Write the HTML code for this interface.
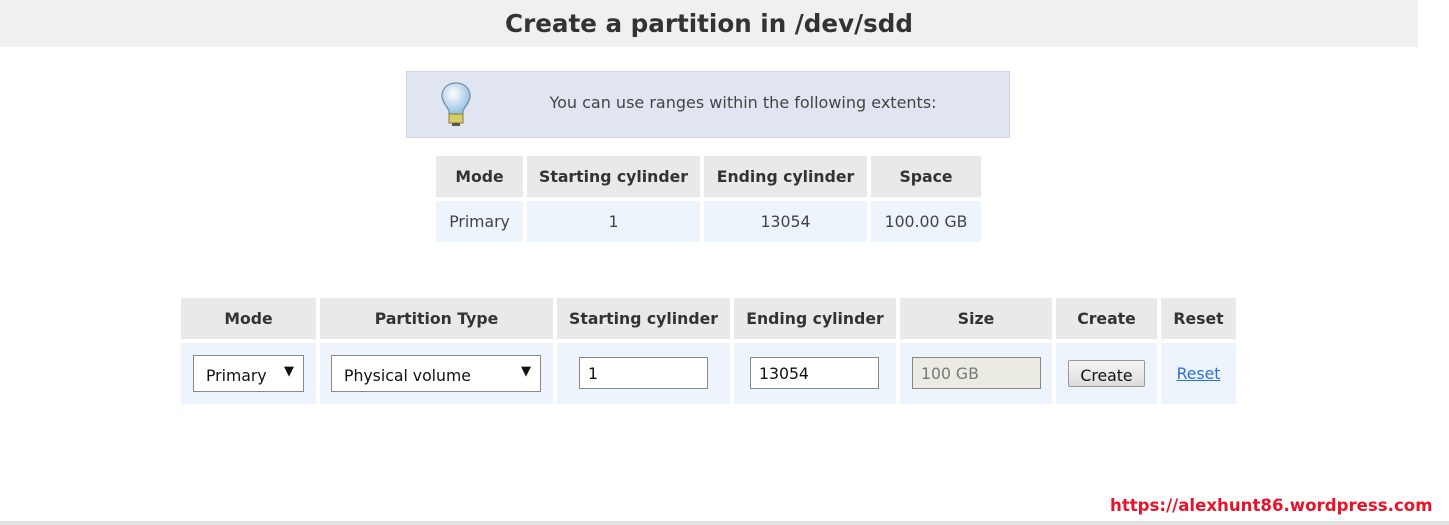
<!DOCTYPE html>
<html><head><meta charset="utf-8"><style>
*{margin:0;padding:0;box-sizing:border-box}
body{width:1449px;height:525px;position:relative;background:#fff;font-family:"DejaVu Sans","Liberation Sans",sans-serif;color:#333;overflow:hidden}
.a{position:absolute}
.c{position:absolute;display:flex;align-items:center;justify-content:center;font-size:15.7px;white-space:nowrap}
.h{background:#e9e9e9;font-weight:bold;color:#333}
.d{background:#edf4fc;color:#444}
.box{position:absolute;background:#fff;border:1px solid #888;font-size:15.7px;color:#111;display:flex;align-items:center;padding-left:8px;white-space:nowrap}
</style></head><body>
<div class="a" style="left:0;top:0;width:1418px;height:47px;background:#f0f0f0"></div>
<div class="c" style="left:0;top:0;width:1418px;height:47px;font-size:24.6px;font-weight:bold;color:#333">Create a partition in /dev/sdd</div>
<div class="a" style="left:406px;top:71px;width:604px;height:67px;background:#e1e5f1;border:1px solid #cfd3e3"></div>
<svg class="a" style="left:438px;top:80px" width="36" height="50" viewBox="0 0 36 50">
<defs><radialGradient id="g" cx="40%" cy="35%" r="60%"><stop offset="0" stop-color="#fff"/><stop offset="1" stop-color="#9cc3e6"/></radialGradient></defs>
<path d="M18 3C9 3 4 9 4 16c0 6 5 10 7 15v3h14v-3c2-5 7-9 7-15C32 9 27 3 18 3z" fill="url(#g)" stroke="#6f8fa8" stroke-width="1.2"/>
<rect x="11" y="34" width="14" height="9" fill="#d8cc6a" stroke="#8c7f30"/>
<rect x="14" y="43" width="8" height="3" fill="#555"/>
</svg>
<div class="c" style="left:549px;top:71px;width:388px;height:63px;font-size:16px;color:#444">You can use ranges within the following extents:</div>

<div class="c h" style="left:436px;top:156px;width:87px;height:41px">Mode</div>
<div class="c h" style="left:527px;top:156px;width:173px;height:41px">Starting cylinder</div>
<div class="c h" style="left:704px;top:156px;width:163px;height:41px">Ending cylinder</div>
<div class="c h" style="left:871px;top:156px;width:110px;height:41px">Space</div>
<div class="c d" style="left:436px;top:201px;width:87px;height:41px">Primary</div>
<div class="c d" style="left:527px;top:201px;width:173px;height:41px">1</div>
<div class="c d" style="left:704px;top:201px;width:163px;height:41px">13054</div>
<div class="c d" style="left:871px;top:201px;width:110px;height:41px">100.00 GB</div>

<div class="c h" style="left:181px;top:298px;width:135px;height:41px">Mode</div>
<div class="c h" style="left:320px;top:298px;width:233px;height:41px">Partition Type</div>
<div class="c h" style="left:557px;top:298px;width:173px;height:41px">Starting cylinder</div>
<div class="c h" style="left:734px;top:298px;width:162px;height:41px">Ending cylinder</div>
<div class="c h" style="left:900px;top:298px;width:152px;height:41px">Size</div>
<div class="c h" style="left:1056px;top:298px;width:101px;height:41px">Create</div>
<div class="c h" style="left:1161px;top:298px;width:75px;height:41px">Reset</div>
<div class="c d" style="left:181px;top:343px;width:135px;height:61px"></div>
<div class="c d" style="left:320px;top:343px;width:233px;height:61px"></div>
<div class="c d" style="left:557px;top:343px;width:173px;height:61px"></div>
<div class="c d" style="left:734px;top:343px;width:162px;height:61px"></div>
<div class="c d" style="left:900px;top:343px;width:152px;height:61px"></div>
<div class="c d" style="left:1056px;top:343px;width:101px;height:61px"></div>
<div class="c d" style="left:1161px;top:343px;width:75px;height:61px"></div>

<div class="box" style="left:193px;top:355px;width:111px;height:37px;padding-left:12px;padding-top:4px">Primary<span class="a" style="right:9px;top:8px;font-size:13px">▼</span></div>
<div class="box" style="left:331px;top:355px;width:210px;height:37px;padding-left:12px;padding-top:4px">Physical volume<span class="a" style="right:9px;top:8px;font-size:13px">▼</span></div>
<div class="box" style="left:579px;top:357px;width:129px;height:32px">1</div>
<div class="box" style="left:750px;top:357px;width:129px;height:32px">13054</div>
<div class="box" style="left:912px;top:357px;width:129px;height:32px;background:#ebebe4;color:#777">100 GB</div>
<div class="c" style="left:1068px;top:360px;width:77px;height:27px;background:linear-gradient(#f6f6f6,#dcdcdc);border:1px solid #999;border-radius:2px;color:#111;padding-top:3px">Create</div>
<div class="c" style="left:1161px;top:343px;width:75px;height:61px;color:#2a6fd6;text-decoration:underline">Reset</div>

<div class="a" style="left:1110px;top:496px;font-size:16.6px;font-weight:bold;color:#e8132a;white-space:nowrap">https://alexhunt86.wordpress.com</div>
<div class="a" style="left:0;top:521px;width:1449px;height:4px;background:#e2e2e2"></div>
</body></html>
